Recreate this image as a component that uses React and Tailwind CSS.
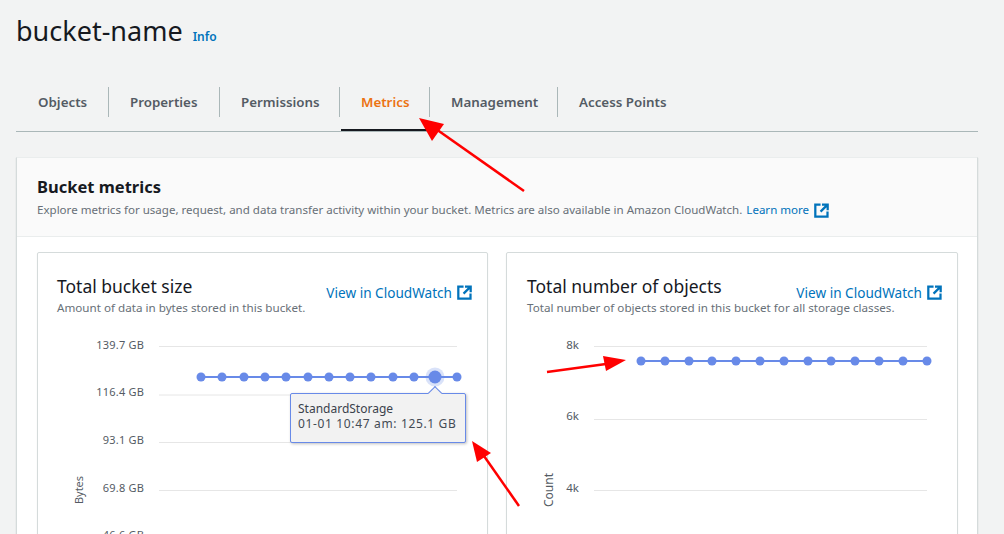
const FONT = "font-['Noto_Sans',sans-serif]";

function ExternalIcon({ className = "" }) {
  return (
    <svg viewBox="0 0 16 16" className={className} fill="none" stroke="#0073bb" strokeWidth="2.4">
      <path d="M7 1.6H1.4v13H14.4V9" />
      <path d="M8.5 1.6h6.1v6.1M14.2 2 7 9.2" />
    </svg>
  );
}

const TABS = [
  ["Objects", "w-[93px] pl-[22px]"],
  ["Properties", "w-[111px] pl-[21px]"],
  ["Permissions", "w-[120px] pl-[21px]"],
  ["Metrics", "w-[90px] pl-[21px]"],
  ["Management", "w-[128px] pl-[21px]"],
  ["Access Points", "w-[130px] pl-[21px]"],
];

function Tabs() {
  return (
    <div className="mt-[19px] flex h-[64px] border-b border-[#aab7b8] pt-[19px]">
      {TABS.map(([t, w], i) => (
        <div key={t} className="relative flex h-[44px] items-start">
          <div
            className={`flex h-[30px] items-center text-[13.35px] font-semibold ${w} ${
              i < TABS.length - 1 ? "border-r border-[#aab7b8]" : ""
            } ${t === "Metrics" ? "text-[#ec7211]" : "text-[#545b64]"}`}
          >
            {t}
          </div>
          {t === "Metrics" && <div className="absolute bottom-0 left-[1px] right-0 h-[2px] bg-[#16191f]" />}
        </div>
      ))}
    </div>
  );
}

function Grid({ lines, x1, x2 }) {
  return lines.map((y) => <line key={y} x1={x1} x2={x2} y1={y} y2={y} stroke="#e6e6e6" strokeWidth="1" />);
}

function Chart1() {
  const xs = [201, 222, 244, 265, 286, 308, 329, 350, 371, 393, 414, 435, 457];
  const rows = [
    ["139.7 GB", 346.5, 349],
    ["116.4 GB", 395, 396],
    ["93.1 GB", 442.5, 444],
    ["69.8 GB", 490.5, 492],
    ["46.6 GB", 538, 539],
  ];
  return (
    <svg width="449" height="200" viewBox="38 334 449 200" className="block">
      <Grid lines={rows.map((r) => r[1])} x1={159} x2={457} />
      {rows.map(([t, y, ty]) => (
        <text key={t} x="144" y={ty} textAnchor="end" fontSize="11" fill="#545b64" letterSpacing="0.2">{t}</text>
      ))}
      <text transform="translate(83 490) rotate(-90)" textAnchor="middle" fontSize="11" fill="#545b64">Bytes</text>
      <line x1="201" x2="457" y1="377" y2="377" stroke="#688ae8" strokeWidth="2" />
      <circle cx="435" cy="377" r="9.5" fill="#688ae8" opacity="0.25" />
      {xs.map((x) => (
        <circle key={x} cx={x} cy="377" r={x === 435 ? 6.5 : 4.5} fill="#688ae8" />
      ))}
    </svg>
  );
}

function Chart2() {
  const xs = [641, 665, 689, 712, 736, 760, 784, 808, 831, 855, 879, 903, 927];
  const rows = [
    ["8k", 346.5, 349],
    ["6k", 419.5, 420],
    ["4k", 490.5, 492],
  ];
  return (
    <svg width="450" height="200" viewBox="507 334 450 200" className="block">
      <Grid lines={rows.map((r) => r[1])} x1={594} x2={927} />
      {rows.map(([t, y, ty]) => (
        <text key={t} x="579" y={ty} textAnchor="end" fontSize="11.5" fill="#545b64">{t}</text>
      ))}
      <text transform="translate(553 490) rotate(-90)" textAnchor="middle" fontSize="12" fill="#545b64">Count</text>
      <line x1="641" x2="927" y1="361" y2="361" stroke="#688ae8" strokeWidth="2" />
      {xs.map((x) => (
        <circle key={x} cx={x} cy="361" r="4.5" fill="#688ae8" />
      ))}
    </svg>
  );
}

function Tooltip() {
  return (
    <div className="absolute left-[252px] top-[140px] h-[50px] w-[176px] rounded-[2px] border border-[#688ae8] bg-[#f2f2f2] px-[7px] pt-[7px] text-[12px] leading-[15px] text-[#444b55] shadow-[1px_1px_3px_rgba(0,0,0,0.25)]">
      <div className="text-[#3b424c]">StandardStorage</div>
      <div className="whitespace-nowrap tracking-[0.65px]">01-01 10:47 am: 125.1 GB</div>
      <div className="absolute left-[139px] top-[-6px] h-[10px] w-[10px] rotate-45 border-l border-t border-[#688ae8] bg-[#f2f2f2]" />
    </div>
  );
}

function Card({ title, sub, chart, tooltip, width, pad }) {
  return (
    <div className={`relative h-[300px] rounded-[2px] border border-[#d5dbdb] bg-white shadow-[0_1px_1px_rgba(0,28,36,0.15)] ${width}`}>
      <div className={`pr-[15px] pt-[22px] ${pad}`}>
        <div className="flex h-[25px] items-start justify-between">
          <div className="text-[17.5px] leading-[23px] text-[#16191f]">{title}</div>
          <div className="flex items-center gap-[5px] pt-[10px] text-[13.6px] leading-[14px] text-[#0073bb]">
            View in CloudWatch
            <ExternalIcon className="h-[15px] w-[15px]" />
          </div>
        </div>
        <div className="whitespace-nowrap text-[11.65px] leading-[15px] text-[#687078]">{sub}</div>
      </div>
      <div className="mt-[19px]">{chart}</div>
      {tooltip}
    </div>
  );
}

export default function App() {
  return (
    <div className={`h-[534px] w-[1004px] overflow-hidden bg-[#f2f3f3] pl-[16px] pr-[26px] ${FONT} relative`}>
      <div className="flex items-end pt-[13px]">
        <h1 className="text-[27px] leading-[36px] font-normal text-[#16191f]">bucket-name</h1>
        <span className="mb-[3px] ml-[10px] text-[12px] font-semibold leading-[18px] text-[#0073bb]">Info</span>
      </div>
      <Tabs />
      <div className="mt-[25px] h-[400px] border border-[#d5dbdb] border-t-[#eaeded] bg-white shadow-[0_1px_1px_rgba(0,28,36,0.2)]">
        <div className="h-[79px] border-b border-[#eaeded] bg-[#fafafa] pl-[20px] pt-[17px]">
          <div className="text-[16.5px] font-bold leading-[24px] text-[#16191f]">Bucket metrics</div>
          <div className="mt-[3px] flex items-center whitespace-nowrap text-[11.55px] leading-[16px] text-[#687078]">
            Explore metrics for usage, request, and data transfer activity within your bucket. Metrics are also available in Amazon CloudWatch.
            <span className="ml-[4px] text-[#0073bb]">Learn more</span>
            <ExternalIcon className="ml-[5px] h-[15px] w-[15px]" />
          </div>
        </div>
        <div className="flex gap-[18px] pl-[20px] pt-[15px]">
          <Card width="w-[451px]" pad="pl-[19px]" title="Total bucket size" sub="Amount of data in bytes stored in this bucket." chart={<Chart1 />} tooltip={<Tooltip />} />
          <Card width="w-[452px]" pad="pl-[20px]" title="Total number of objects" sub="Total number of objects stored in this bucket for all storage classes." chart={<Chart2 />} />
        </div>
      </div>
      <svg className="pointer-events-none absolute left-0 top-0" width="1004" height="534" viewBox="0 0 1004 534" fill="none">
        <line x1="524" y1="191" x2="436" y2="129" stroke="#ff0000" strokeWidth="2.5" />
        <polygon points="419,118 444,124 432,141" fill="#ff0000" />
        <line x1="547" y1="372" x2="606" y2="364" stroke="#ff0000" strokeWidth="2.5" />
        <polygon points="626,360 603,356 606,371" fill="#ff0000" />
        <line x1="519" y1="506" x2="484" y2="456" stroke="#ff0000" strokeWidth="2.5" />
        <polygon points="472,441 477,462 491,453" fill="#ff0000" />
      </svg>
    </div>
  );
}
